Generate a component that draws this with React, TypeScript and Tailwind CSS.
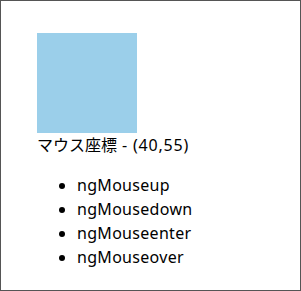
import React from 'react';

const events = ['ngMouseup', 'ngMousedown', 'ngMouseenter', 'ngMouseover'];

const App: React.FC = () => {
  return (
    <div
      className="w-[301px] h-[291px] border border-[#555555] bg-white text-black text-[16px] leading-6 pl-9 pt-8"
      style={{ fontFamily: '"Noto Sans", "Noto Sans CJK JP", sans-serif' }}
    >
      <div className="w-[100px] h-[100px] bg-[#9bcfea]" />
      <p>
        マウス座標<span className="tracking-[0.8px]"> - (40,55)</span>
      </p>
      <ul className="mt-4 pl-10 list-disc tracking-[0.3px]">
        {events.map(name => (
          <li key={name}>{name}</li>
        ))}
      </ul>
    </div>
  );
};

export default App;
